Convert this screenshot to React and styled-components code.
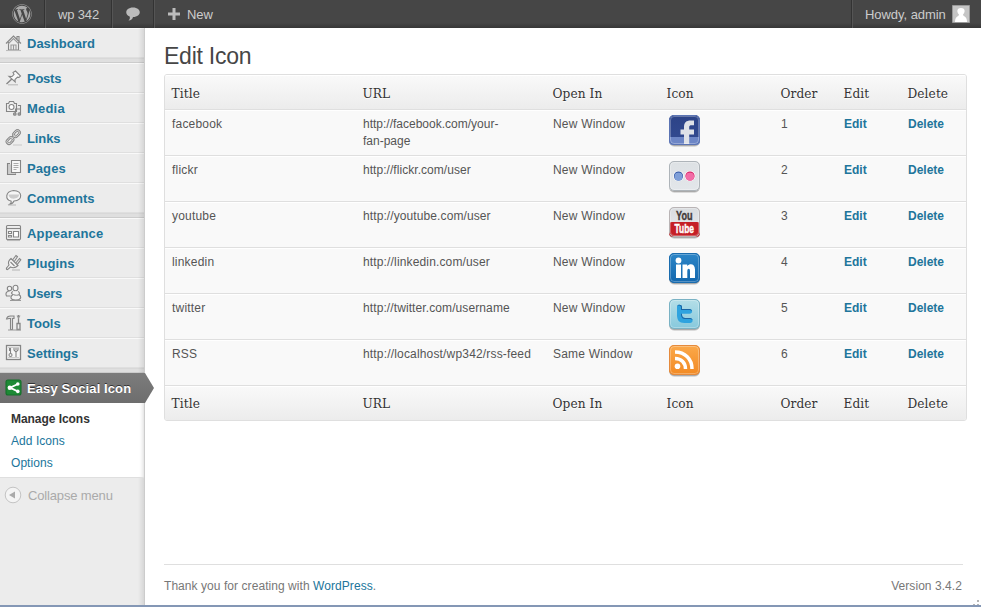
import React from "react";
import styled, { createGlobalStyle, css } from "styled-components";
import { FaWordpress } from "react-icons/fa";

const Global = createGlobalStyle`
  * { box-sizing: border-box; }
  html, body { margin: 0; padding: 0; background: #fff; }
  body { font: 12px/17px "Liberation Sans", Arial, sans-serif; color: #555; overflow: hidden; }
  a { color: #21759b; text-decoration: none; }
`;

const Page = styled.div`
  height: 607px;
  display: flex;
  flex-direction: column;
`;

const AdminBar = styled.header`
  height: 28px;
  flex: none;
  display: flex;
  background: linear-gradient(to top, #373737 0, #464646 5px);
  color: #ccc;
  font-size: 13px;
  line-height: 28px;
`;

const BarItem = styled.div`
  width: ${(p) => p.$width}px;
  padding-left: ${(p) => p.$pad}px;
  display: flex;
  align-items: center;
  border-right: 1px solid #555;
  box-shadow: inset -1px 0 #333;
  letter-spacing: ${(p) => p.$track || 0}px;
  svg { flex: none; }
`;

const BarText = styled.span`
  padding-top: 2px;
`;

const NewItem = styled.div`
  display: flex;
  align-items: center;
  gap: 7px;
  padding-left: 13px;
  letter-spacing: -0.1px;
`;

const Account = styled.div`
  margin-left: auto;
  width: 130px;
  padding: 0 0 0 13px;
  display: flex;
  align-items: center;
  gap: 6px;
  border-left: 1px solid #333;
  box-shadow: inset 1px 0 #555;
  letter-spacing: -0.05px;
`;

const Body = styled.div`
  display: flex;
  height: 577px;
`;

const Sidebar = styled.nav`
  position: relative;
  width: 145px;
  flex: none;
  background: #ececec;
  border-right: 1px solid #ccc;
  &::after {
    content: "";
    position: absolute;
    right: 0;
    top: 0;
    width: 6px;
    height: 100%;
    background: linear-gradient(to right, rgba(0, 0, 0, 0), rgba(0, 0, 0, 0.09));
    pointer-events: none;
  }
`;

const MenuItem = styled.a`
  height: 30px;
  display: flex;
  align-items: center;
  gap: 5px;
  padding-left: 5px;
  border-top: 1px solid #f9f9f9;
  border-bottom: 1px solid #dfdfdf;
  font-size: 13px;
  font-weight: bold;
  letter-spacing: ${(p) => p.$track || 0}px;
  svg { flex: none; }
  ${(p) =>
    p.$active &&
    css`
      position: relative;
      z-index: 1;
      width: 154px;
      color: #fff;
      border: 0;
      background: linear-gradient(#7c7c7c, #6d6d6d);
      text-shadow: 0 -1px 0 #333;
      clip-path: polygon(0 0, 145px 0, 154px 50%, 145px 100%, 0 100%);
    `}
`;

const Separator = styled.div`
  height: 5px;
  background: #dfdfdf;
  border-top: 1px solid #d8d8d8;
  border-bottom: 1px solid #ccc;
`;

const Submenu = styled.div`
  position: relative;
  z-index: 1;
  height: 75px;
  padding: 5px 0 0 11px;
  display: flex;
  flex-direction: column;
  background: #fff;
  border-bottom: 1px solid #dfdfdf;
  line-height: 22px;
  box-shadow: inset -5px 0 5px -5px rgba(0, 0, 0, 0.22);
`;

const SubLink = styled.a`
  letter-spacing: 0.05px;
  ${(p) => p.$current && "color: #333; font-weight: bold; letter-spacing: -0.05px;"}
`;

const Collapse = styled.div`
  display: flex;
  align-items: center;
  gap: 6px;
  height: 34px;
  padding-left: 4px;
  color: #aaa;
  font-size: 13px;
  letter-spacing: -0.15px;
  svg { margin-top: -1px; }
`;

const Content = styled.main`
  width: 836px;
  padding-left: 19px;
  display: flex;
  flex-direction: column;
`;

const Heading = styled.h2`
  margin: 0;
  height: 46px;
  padding-top: 14px;
  font-size: 23px;
  font-weight: normal;
  line-height: 29px;
  color: #464646;
  letter-spacing: -0.25px;
`;

const Table = styled.section`
  width: 803px;
  border: 1px solid #dfdfdf;
  border-radius: 3px;
  background: #f9f9f9;
  overflow: hidden;
`;

const rowGrid = css`
  display: grid;
  grid-template-columns: 191px 190px 114px 114px 63px 64px 65px;
`;

const HeadRow = styled.div`
  ${rowGrid}
  height: ${(p) => (p.$foot ? 34 : 35)}px;
  background: linear-gradient(#f9f9f9, #ececec);
  border-top: 1px solid #fff;
  ${(p) => !p.$foot && "border-bottom: 1px solid #dfdfdf;"}
  font-family: "DejaVu Serif Condensed", "DejaVu Serif", serif;
  font-stretch: condensed;
  font-size: 13.5px;
  line-height: ${(p) => (p.$foot ? 32 : 34)}px;
  color: #333;
  text-shadow: 0 1px 0 rgba(255, 255, 255, 0.8);
  span { padding-left: 6.500px; letter-spacing: 0.1px; }
`;

const Row = styled.div`
  ${rowGrid}
  height: 46px;
  border-top: 1px solid #fff;
  border-bottom: 1px solid #dfdfdf;
`;

const Cell = styled.div`
  padding: 5px 0 0 7px;
  letter-spacing: ${(p) => p.$track ?? 0.2}px;
  white-space: pre-line;
`;

const IconCell = styled.div`
  padding: 2px 0 0 7px;
  svg { display: block; }
`;

const Action = styled.a`
  padding: 5px 0 0 7px;
  font-weight: bold;
`;

const Footer = styled.footer`
  width: 799px;
  margin-top: auto;
  height: 41px;
  padding: 13px 1px 0 0;
  display: flex;
  justify-content: space-between;
  border-top: 1px solid #dfdfdf;
  color: #777;
  letter-spacing: 0.06px;
`;

const BottomEdge = styled.div`
  height: 2px;
  background: #8497b5;
`;

const Grip = styled.svg`
  position: absolute;
  left: 973px;
  top: 600px;
`;

const MenuSvg = ({ children }) => (
  <svg width="17" height="18" viewBox="0 0 17 18" fill="none" stroke="#858585" strokeWidth="1.1">
    {children}
  </svg>
);

const icons = {
  dashboard: (
    <>
      <path d="M1 9.500 8.500 2l7.500 7.500M3.500 8v8h10V8M12 5V2.500h2V7" />
      <path d="M3 10 8.500 4.500 14 10M6 16v-5h5v5M8.500 11v5" stroke="#999" />
      <path d="M1 16.500h15" stroke="#bbb" />
    </>
  ),
  posts: (
    <>
      <path d="M8 3.500 10.500 2l5 5-1.500 1.500-1.500-.300L10 10.500l.200 2.500L4 7.300l3 .200L9 5.300z" fill="#f8f8f8" />
      <path d="M6.800 10 1.500 15" strokeWidth="1.400" />
      <path d="M3 15.800h10" stroke="#bbb" />
    </>
  ),
  media: (
    <>
      <path d="M1.500 4.500h2l1-2h4l1 2h2v8h-10z" fill="#eee" />
      <circle cx="6.500" cy="8" r="2.500" fill="#fff" />
      <path d="M13 6.500h2.500v9M10.500 15v-5h5" />
      <circle cx="9.800" cy="15" r="1.300" fill="#aaa" />
      <circle cx="14.300" cy="15" r="1.300" fill="#aaa" />
    </>
  ),
  links: (
    <>
      <g strokeWidth="2.600">
        <rect x="8" y="2.500" width="7" height="4.200" rx="2.100" transform="rotate(-45 11.500 4.600)" />
        <rect x="1.500" y="9.500" width="7" height="4.200" rx="2.100" transform="rotate(-45 5 11.600)" />
        <path d="m6.500 10 4-4" />
      </g>
      <g stroke="#e6e6e6" strokeWidth=".8">
        <rect x="8" y="2.500" width="7" height="4.200" rx="2.100" transform="rotate(-45 11.500 4.600)" />
        <rect x="1.500" y="9.500" width="7" height="4.200" rx="2.100" transform="rotate(-45 5 11.600)" />
        <path d="m6.500 10 4-4" />
      </g>
      <path d="M8 16h9" stroke="#ccc" />
    </>
  ),
  pages: (
    <>
      <path d="M5 4.500H2.500v11h8v-1" fill="#ccc" />
      <path d="M6.500 1.500h9v12h-9z" fill="#f7f7f7" />
      <path d="M8.500 4.500h5M8.500 6.500h5M8.500 8.500h5M8.500 10.500h3" stroke="#aaa" />
    </>
  ),
  comments: (
    <>
      <path d="M6 12C0 10.500 0 2.500 8.500 1.500 18 2 18 11.500 9 12c-1 2-2.500 3.500-4.500 3.500C6 14.500 6.500 13 6 12z" fill="#f6f6f6" />
      <path d="M3.500 5.500h10.500c.500 5-10.500 6-10.500 0z" fill="#ccc" stroke="none" />
      <path d="M3 16h8" stroke="#bbb" />
    </>
  ),
  appearance: (
    <>
      <rect x="1.500" y="1.500" width="14" height="14" rx="1" fill="#eee" />
      <path d="M2 4.500h13" />
      <path d="M3.500 7.500h3v2h-3zM3.500 11.500h3v1.500h-3zM8.500 7.500h5v5.500h-5z" fill="#fff" />
      <path d="M2 16.500h13" stroke="#bbb" />
    </>
  ),
  plugins: (
    <>
      <path d="m6 4.500 7 7c-2.500 2.500-5.500 2.500-7.500 1.500l-1.800 1.700C2 16.500.500 15 2 13.500L4 11c-1-2-.500-4.500 2-6.500z" fill="#f4f4f4" />
      <path d="m7.500 6 3.500-4.500 1.500 1.200L9.300 7.500M10.800 9l3.700-4.500 1.300 1.300-3.500 4.500M5.500 8l4 4" />
      <path d="M7 16h8" stroke="#bbb" />
    </>
  ),
  users: (
    <>
      <circle cx="4.500" cy="4.500" r="2.200" fill="#f3f3f3" />
      <path d="M5.500 12H1.500C0 9 2 7 4.500 7" />
      <ellipse cx="10.500" cy="4" rx="2.500" ry="2.800" fill="#f3f3f3" />
      <path d="M8 7.500c-2 1-2 2 0 3-3 2-3 5.500 2.500 5.500s6.500-3 3.500-5.500c.800-1 .500-2.500-1-3" fill="#f3f3f3" />
      <path d="M8.500 10.500c2 1 4 1 5.500 0M5 16.500h11" stroke="#999" />
    </>
  ),
  tools: (
    <>
      <path d="M1.500 5c.500-2.500 2-3 4-3H9v2.500H7.500v11h-2v-11H4L2 5z" fill="#e2e2e2" />
      <path d="M13.500 1v8M12 9.500h3v6h-3z" fill="#eee" strokeWidth="1.300" />
      <path d="M12 1.500 13.500 4 15 1.500M3 16h13" stroke="#999" />
    </>
  ),
  settings: (
    <>
      <rect x="1.500" y="1.500" width="14" height="14" fill="#f6f6f6" strokeWidth="1.300" />
      <path d="M3 3.500h11M3 13.500h11" stroke="#ccc" />
      <circle cx="5.500" cy="11" r="1.500" />
      <path d="M5.500 4v5.500M4.500 4v3M11 8v5M9 4v2l2 2 2-2V4M11 4v2" />
    </>
  ),
  share: (
    <>
      <rect x="1" y="1" width="15" height="15" rx="2" fill="#1d8a35" stroke="#14702a" />
      <path d="M13 5 5 8.700l8 3.800" stroke="#fff" strokeWidth="1.900" />
      <g fill="#fff" stroke="none">
        <circle cx="12.800" cy="5" r="1.800" />
        <circle cx="4.800" cy="8.700" r="2.200" />
        <circle cx="12.800" cy="12.400" r="1.800" />
      </g>
    </>
  ),
};

/* 32px-tall rounded tile shared by all social icons */
const Tile = ({ id, top, bottom, edge, children }) => (
  <svg width="36" height="37" viewBox="0 0 36 37">
    <defs>
      <linearGradient id={`${id}-bg`} x1="0" y1="0" x2="0" y2="1">
        <stop offset="0" stopColor={top} />
        <stop offset="1" stopColor={bottom} />
      </linearGradient>
      <clipPath id={`${id}-clip`}>
        <rect x="2" y="2" width="31" height="30" rx="4" />
      </clipPath>
    </defs>
    <rect x="2.500" y="4" width="30" height="30" rx="5" fill="#000" opacity=".12" />
    <rect x="2" y="3" width="31" height="30" rx="5" fill="#000" opacity=".22" />
    <rect x="2" y="2" width="31" height="30" rx="5" fill={`url(#${id}-bg)`} />
    <g clipPath={`url(#${id}-clip)`}>{children}</g>
    <rect x="3.500" y="3.500" width="28" height="27" rx="3.500" fill="none" stroke="#fff" opacity=".28" />
    <rect x="2.500" y="2.500" width="30" height="29" rx="4.500" fill="none" stroke={edge} />
  </svg>
);

const social = {
  facebook: (
    <Tile id="fb" top="#2c4387" bottom="#334b92" edge="#5b74b4">
      <path d="M2 24h31v8H2z" fill="#6d86c6" />
      <path d="M17 32V21.500h-3.500V16.500H17V14c0-4.500 2.500-6.500 6.500-6.500H27v4.800h-2.500c-1.500 0-2.300.500-2.300 2v2.200H27v5h-4.800V32z" fill="#dfe2e8" />
    </Tile>
  ),
  flickr: (
    <Tile id="fl" top="#dde1e4" bottom="#e3e6ea" edge="#aeb4b9">
      <circle cx="11.500" cy="17" r="5.300" fill="#fff" />
      <circle cx="23" cy="17" r="5.300" fill="#fff" />
      <circle cx="11.500" cy="17" r="4.600" fill="#2b4f9e" />
      <circle cx="23" cy="17" r="4.600" fill="#d3145a" />
      <circle cx="11.500" cy="17.700" r="4.100" fill="#7f9fd8" />
      <circle cx="23" cy="17.700" r="4.100" fill="#f26da7" />
    </Tile>
  ),
  youtube: (
    <Tile id="yt" top="#d9dcdf" bottom="#e9ebed" edge="#b9b4b5">
      <rect x="2" y="17" width="31" height="16" rx="3" fill="#c51f26" />
      <g fontFamily="Liberation Sans, Arial, sans-serif" fontWeight="bold" fontSize="12.500" strokeWidth=".4">
        <text x="9" y="14.500" textLength="16.500" lengthAdjust="spacingAndGlyphs" fill="#41393a" stroke="#41393a">You</text>
        <text x="7.500" y="28" textLength="19.500" lengthAdjust="spacingAndGlyphs" fill="#fff" stroke="#fff">Tube</text>
      </g>
    </Tile>
  ),
  linkedin: (
    <Tile id="li" top="#2c86c8" bottom="#1467ad" edge="#1a6cae">
      <g fill="#fff">
        <circle cx="11.500" cy="9.500" r="2.900" />
        <path d="M9 13.500h5V27H9zM15.500 13.500h4.700v1.500c3-3.300 7.800-2 7.800 3.500V27h-5v-7c0-3.200-2.700-2.800-2.700 0v7h-4.800z" />
      </g>
    </Tile>
  ),
  twitter: (
    <Tile id="tw" top="#b5dfe8" bottom="#86c8dc" edge="#7ab2c4">
      <path d="M10 9c1.500-2 5-1.500 5 1v2h7.500c3.500 0 3.500 4.700 0 4.700H15c0 3.300 1 4.300 4 4.300h4c3.500 0 3.500 5 0 5h-5.500C12 26 10 23 10 18z" fill="#2ea3df" />
      <path d="M10 9c1.500-2 5-1.500 5 1v2h7.500c1.500 0 2.500 1 2.500 2-1-1-2-1-3-1H14v-3c0-1.500-3-2-4-1zM15 16.700c0 3.300 1 4.300 4 4.300h4c1.500 0 2.500 1 2.500 2-1-1-2-1-3-1h-4c-3 0-4.500-1.500-4.500-5.300z" fill="#1b66a5" />
    </Tile>
  ),
  rss: (
    <Tile id="rs" top="#fba94a" bottom="#f28a24" edge="#e58a3c">
      <g fill="none" stroke="#fff" strokeWidth="3.500">
        <path d="M8 15.500c6.500 0 10.500 4.500 10.500 10.500M8 9c10 0 17 7 17 17" />
      </g>
      <circle cx="10.500" cy="23.300" r="2.800" fill="#fff" />
    </Tile>
  ),
};

const menuGroups = [
  [["Dashboard", "dashboard", 0]],
  [
    ["Posts", "posts", -0.25],
    ["Media", "media", 0.2],
    ["Links", "links", -0.1],
    ["Pages", "pages", 0.1],
    ["Comments", "comments", 0.05],
  ],
  [
    ["Appearance", "appearance", 0.2],
    ["Plugins", "plugins", 0.1],
    ["Users", "users", -0.2],
    ["Tools", "tools", 0],
    ["Settings", "settings", 0],
  ],
];

const columns = ["Title", "URL", "Open In", "Icon", "Order", "Edit", "Delete"];

const rows = [
  ["facebook", "http://facebook.com/your-\nfan-page", "New Window", 0],
  ["flickr", "http://flickr.com/user", "New Window", 0.05],
  ["youtube", "http://youtube.com/user", "New Window", 0.1],
  ["linkedin", "http://linkedin.com/user", "New Window", 0.15],
  ["twitter", "http://twitter.com/username", "New Window", 0.1],
  ["RSS", "http://localhost/wp342/rss-feed", "Same Window", 0.17],
];

const ColumnLabels = ({ foot }) => (
  <HeadRow $foot={foot}>
    {columns.map((c) => (
      <span key={c}>{c}</span>
    ))}
  </HeadRow>
);

export default function App() {
  return (
    <Page>
      <Global />
      <AdminBar>
        <BarItem $width={46} $pad={12}>
          <FaWordpress size={20} color="#aaa" />
        </BarItem>
        <BarItem $width={67} $pad={12} $track={-0.15}>
          <BarText>wp 342</BarText>
        </BarItem>
        <BarItem $width={42} $pad={13}>
          <svg width="14" height="14" viewBox="0 0 14 14">
            <path d="M7 .500c9 0 9 9.500 0 9.500-.500 2-2 3.500-4.500 3.500C4 12.300 4 11 3.700 9.500-2 7.500-.500.500 7 .500z" fill="#bbb" />
          </svg>
        </BarItem>
        <NewItem>
          <svg width="12" height="12" viewBox="0 0 12 12">
            <path d="M4.500 0h3v4.500H12v3H7.500V12h-3V7.500H0v-3h4.500z" fill="#bbb" />
          </svg>
          <BarText>New</BarText>
        </NewItem>
        <Account>
          <BarText>Howdy, admin</BarText>
          <svg width="18" height="18" viewBox="0 0 18 18">
            <path d="M.500.500h17v17H.500z" fill="#c5c5c5" stroke="#999" />
            <path d="M9 3c5 0 4 5 2 6.500 0 2 4 1.500 4 7.500H3c0-6 4-5.500 4-7.500C5 8 4 3 9 3z" fill="#fff" />
          </svg>
        </Account>
      </AdminBar>
      <Body>
        <Sidebar>
          {menuGroups.map((group) => (
            <React.Fragment key={group[0][0]}>
              {group.map(([label, icon, track]) => (
                <MenuItem key={label} $track={track}>
                  <MenuSvg>{icons[icon]}</MenuSvg>
                  {label}
                </MenuItem>
              ))}
              <Separator />
            </React.Fragment>
          ))}
          <MenuItem $active $track={0.1}>
            <MenuSvg>{icons.share}</MenuSvg>
            Easy Social Icon
          </MenuItem>
          <Submenu>
            <SubLink $current>Manage Icons</SubLink>
            <SubLink>Add Icons</SubLink>
            <SubLink>Options</SubLink>
          </Submenu>
          <Collapse>
            <svg width="18" height="18" viewBox="0 0 18 18">
              <circle cx="9" cy="9" r="7.800" fill="#f4f4f4" stroke="#c4c4c4" />
              <path d="M5 9l6-3.500v7z" fill="#aaa" />
            </svg>
            Collapse menu
          </Collapse>
        </Sidebar>
        <Content>
          <Heading>Edit Icon</Heading>
          <Table>
            <ColumnLabels />
            {rows.map(([title, url, target, track], i) => (
              <Row key={title}>
                <Cell>{title}</Cell>
                <Cell $track={track}>{url}</Cell>
                <Cell>{target}</Cell>
                <IconCell>{social[title.toLowerCase()]}</IconCell>
                <Cell>{i + 1}</Cell>
                <Action>Edit</Action>
                <Action>Delete</Action>
              </Row>
            ))}
            <ColumnLabels foot />
          </Table>
          <Footer>
            <span>
              Thank you for creating with <a>WordPress</a>.
            </span>
            <span>Version 3.4.2</span>
          </Footer>
        </Content>
      </Body>
      <BottomEdge />
      <Grip width="8" height="5" viewBox="0 0 8 5">
        <path d="M4 0h2v2H4zM0 4h2v1H0zM4 4h2v1H4z" fill="#b5b5b5" />
      </Grip>
    </Page>
  );
}
